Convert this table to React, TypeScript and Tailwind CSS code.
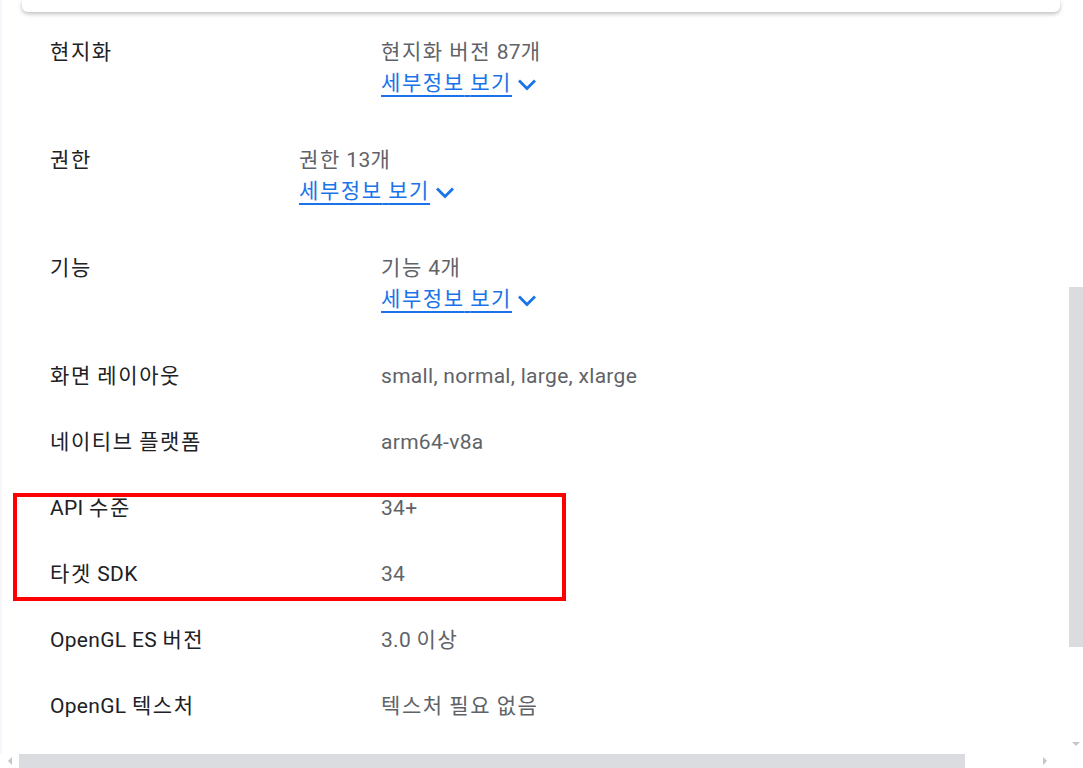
import React from 'react';

type Row = { label: string; value: string; details?: boolean; offset?: boolean };

const rows: Row[] = [
  { label: '현지화', value: '현지화 버전 87개', details: true },
  { label: '권한', value: '권한 13개', details: true, offset: true },
  { label: '기능', value: '기능 4개', details: true },
  { label: '화면 레이아웃', value: 'small, normal, large, xlarge' },
  { label: '네이티브 플랫폼', value: 'arm64-v8a' },
  { label: 'API 수준', value: '34+' },
  { label: '타겟 SDK', value: '34' },
  { label: 'OpenGL ES 버전', value: '3.0 이상' },
  { label: 'OpenGL 텍스처', value: '텍스처 필요 없음' },
];

// hangul runs get a bit of extra spacing so they line up with the screenshot
const Txt: React.FC<{ text: string }> = ({ text }) => (
  <>
    {text.split(/([\uac00-\ud7a3]+)/).map((part, i) =>
      /[\uac00-\ud7a3]/.test(part) ? (
        <span key={i} className="tracking-[1.6px]">
          {part}
        </span>
      ) : (
        <span key={i} className="tracking-[0.3px]">
          {part}
        </span>
      )
    )}
  </>
);

const Chevron = () => (
  <svg width="24" height="24" viewBox="0 0 24 24" className="ml-[3px] mt-[2px]">
    <path d="M4 8.5l8 8 8-8" fill="none" stroke="#1a73e8" strokeWidth="2.8" />
  </svg>
);

const DetailRow: React.FC<{ row: Row }> = ({ row }) => (
  <div className="flex py-[19px] text-[21px] leading-[28px]">
    <div className={row.offset ? 'w-[249px] shrink-0 text-[#202124]' : 'w-[331px] shrink-0 text-[#202124]'}>
      <Txt text={row.label} />
    </div>
    <div className="text-[#5f6368]">
      <div>
        <Txt text={row.value} />
      </div>
      {row.details && (
        <div className="mt-[3px] mb-[11px] flex items-center">
          <a href="#" className="text-[#1a73e8] underline underline-offset-[5px] decoration-[2px]">
            <Txt text="세부정보 보기" />
          </a>
          <Chevron />
        </div>
      )}
    </div>
  </div>
);

export default function App() {
  return (
    <div
      className="relative flex h-[768px] w-[1083px] flex-col overflow-hidden bg-white"
      style={{ fontFamily: "Roboto, 'Noto Sans CJK KR', sans-serif" }}
    >
      <div className="flex min-h-0 flex-1">
        <div className="min-w-0 flex-1 border-l-2 border-[#f6f7fc]">
          <div className="ml-[20px] mr-[9px] h-[12px] rounded-b-md bg-white shadow-[0_2px_4px_rgba(0,0,0,0.25)]" />
          <div className="mt-[7px] pl-[48px]">
            {rows.map((r) => (
              <DetailRow key={r.label} row={r} />
            ))}
          </div>
        </div>
        <div className="flex w-[14px] shrink-0 flex-col">
          <div className="h-[287px]" />
          <div className="h-[360px] bg-[#dadce0]" />
          <div className="flex flex-1 items-end justify-center pb-[8px]">
            <div className="h-0 w-0 border-x-[4px] border-t-[4px] border-x-transparent border-t-[#c4c6ca]" />
          </div>
        </div>
      </div>
      <div className="flex h-[14px] shrink-0 items-center">
        <div className="flex w-[19px] justify-center">
          <div className="h-0 w-0 border-y-[4px] border-r-[4px] border-y-transparent border-r-[#c4c6ca]" />
        </div>
        <div className="h-full w-[946px] bg-[#dadce0]" />
        <div className="flex flex-1 justify-end pr-[22px]">
          <div className="h-0 w-0 border-y-[4px] border-l-[4px] border-y-transparent border-l-[#c4c6ca]" />
        </div>
        <div className="w-[14px]" />
      </div>

      {/* annotation box drawn over the API / target SDK rows */}
      <div className="pointer-events-none absolute left-[13px] top-[493px] h-[108px] w-[553px] border-[4px] border-[#ff0000]" />
    </div>
  );
}
